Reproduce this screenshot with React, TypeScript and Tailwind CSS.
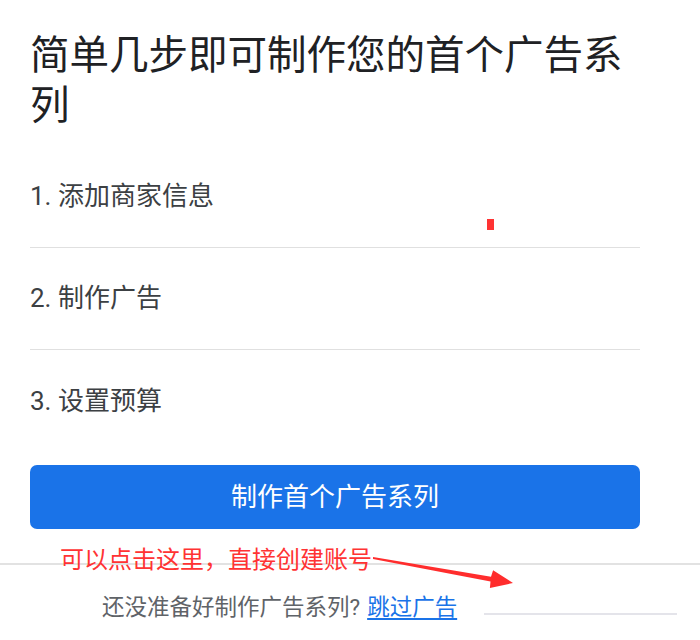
import React from "react";

const font = { fontFamily: 'Roboto, "Noto Sans CJK SC", sans-serif' };

export default function App() {
  const steps = ["1. 添加商家信息", "2. 制作广告", "3. 设置预算"];
  return (
    <div className="relative w-[700px] h-[640px] bg-white overflow-hidden" style={font}>
      <div className="px-[30px] pt-[31px] w-[670px]">
        <h1 className="text-[39.5px] leading-[50px] text-[#202124] font-normal w-[610px]">
          简单几步即可制作您的首个广告系列
        </h1>
        <div className="mt-[15px] w-[610px]">
          {steps.map((s, i) => (
            <div
              key={s}
              className={
                "h-[102px] flex items-center text-[26px] text-[#3c4043] " +
                (i < steps.length - 1 ? "border-b border-[#e0e0e0]" : "")
              }
            >
              {s}
            </div>
          ))}
        </div>
        <button className="mt-[13px] w-[610px] h-[64px] rounded-[7px] bg-[#1a73e8] text-white text-[26px] flex items-center justify-center">
          制作首个广告系列
        </button>
      </div>
      <div className="mt-[34px] h-[2px] bg-[#e2e2e2]" />
      <div className="pl-[102px] pt-[27px] flex items-center">
        <span className="text-[22.5px] leading-[30px] text-[#5f6368]">还没准备好制作广告系列? </span>
        <span className="ml-[7px] text-[22.5px] leading-[30px] text-[#1a73e8] underline underline-offset-[3px]">跳过广告</span>
        <div className="ml-[27px] mt-[14px] w-[193px] h-[2px] bg-[#e4e4ea]" />
      </div>

      {/* annotations */}
      <div className="absolute left-[487px] top-[219px] w-[7px] h-[11px] bg-[#ff3333]" />
      <div className="absolute left-[60px] top-[546px] text-[24px] leading-[28px] text-[#ff3333] whitespace-nowrap">
        可以点击这里，直接创建账号
      </div>
      <svg className="absolute left-[370px] top-[550px]" width="150" height="45" viewBox="0 0 150 45">
        <polygon
          points="3,7 121,26.8 123.1,20.3 143,33 119.9,38.1 120.5,31.5 3,9"
          fill="#ff2d2d"
        />
      </svg>
    </div>
  );
}
